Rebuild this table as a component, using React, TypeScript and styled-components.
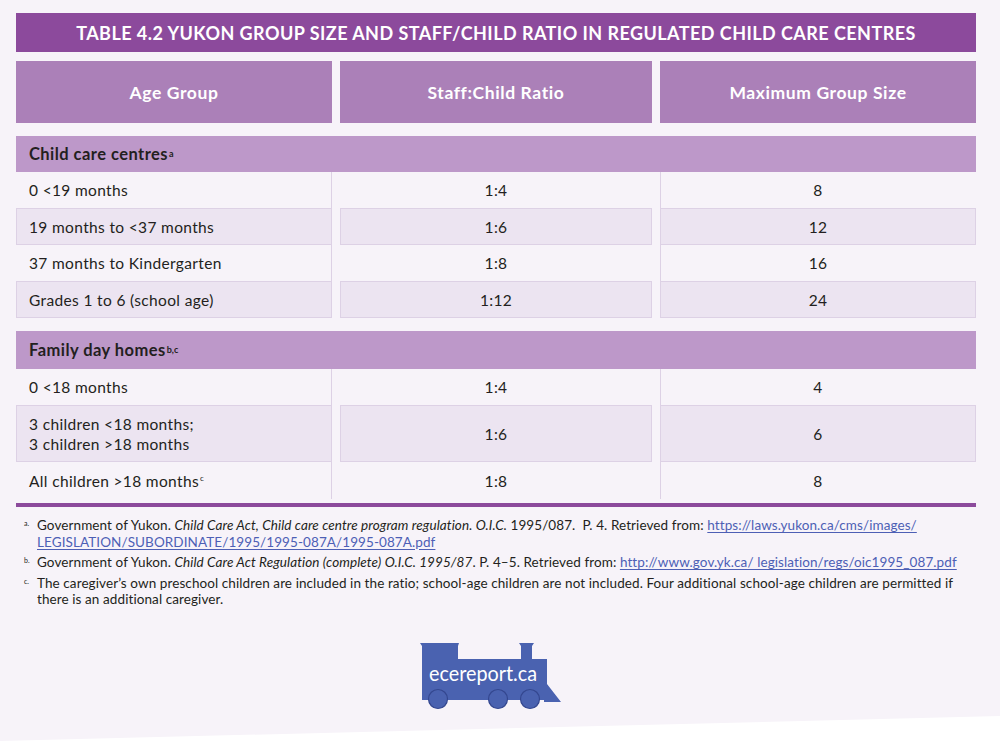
import React from 'react';
import styled, { createGlobalStyle } from 'styled-components';

const colors = {
  page: '#f7f3f9',
  title: '#8c4a9c',
  header: '#ab80b8',
  section: '#bd98c9',
  shaded: '#ece4f1',
  line: '#ddd1e5',
  text: '#231f20',
  link: '#4d5fb5',
  train: '#4a62b0',
};

const GlobalStyle = createGlobalStyle`
  html, body {
    margin: 0;
    padding: 0;
    background: #ffffff;
  }
  body {
    font-family: Lato, "Open Sans", sans-serif;
    color: ${colors.text};
  }
`;

const Page = styled.div`
  min-height: 743px;
  box-sizing: border-box;
  padding: 13px 24px 0 16px;
  background: ${colors.page};
  clip-path: polygon(0 0, 100% 0, 100% 716px, 0 741px);
`;

const Table = styled.div`
  width: 960px;
`;

const TitleBar = styled.div`
  height: 39px;
  display: flex;
  align-items: center;
  justify-content: center;
  background: ${colors.title};
  color: #fff;
  font-size: 18px;
  font-weight: 700;
  letter-spacing: 0.45px;
  text-transform: uppercase;
`;

const Grid = styled.div<{ $top?: number }>`
  display: grid;
  grid-template-columns: 316px 312px 316px;
  column-gap: 8px;
  margin-top: ${(p) => p.$top ?? 0}px;
`;

const HeaderCell = styled.div`
  height: 62px;
  display: flex;
  align-items: center;
  justify-content: center;
  background: ${colors.header};
  color: #fff;
  font-size: 17.5px;
  font-weight: 700;
  letter-spacing: 0.6px;
`;

const SectionRow = styled.div<{ $top: number; $height: number }>`
  margin-top: ${(p) => p.$top}px;
  height: ${(p) => p.$height}px;
  display: flex;
  align-items: center;
  padding-left: 13px;
  background: ${colors.section};
  font-size: 16.5px;
  font-weight: 700;
  letter-spacing: 0.45px;

  sup {
    font-size: 9px;
    font-weight: 700;
    vertical-align: 6px;
    line-height: 0;
    margin-left: 1px;
    letter-spacing: 0;
  }
`;

const Cell = styled.div<{ $shaded?: boolean; $center?: boolean; $edge?: 'left' | 'right'; $height: number }>`
  box-sizing: border-box;
  min-height: ${(p) => p.$height}px;
  display: flex;
  align-items: center;
  justify-content: ${(p) => (p.$center ? 'center' : 'flex-start')};
  padding-left: ${(p) => (p.$center ? 0 : 13)}px;
  font-size: 15.5px;
  letter-spacing: 0.35px;
  line-height: 20px;
  background: ${(p) => (p.$shaded ? colors.shaded : colors.page)};
  box-shadow: ${(p) =>
    p.$shaded
      ? `inset 0 0 0 1px ${colors.line}`
      : p.$edge === 'right'
      ? `inset -1px 0 0 ${colors.line}`
      : p.$edge === 'left'
      ? `inset 1px 0 0 ${colors.line}`
      : 'none'};

  sup {
    font-size: 8px;
    vertical-align: 6px;
    line-height: 0;
    margin-left: 1px;
  }
`;

const Rule = styled.div`
  margin-top: 4px;
  height: 4px;
  background: ${colors.title};
`;

const Notes = styled.ol`
  list-style: none;
  margin: 10px 0 0;
  padding: 0;
  font-size: 13.5px;
  letter-spacing: 0.09px;
  line-height: 16.5px;
`;

const Note = styled.li`
  display: grid;
  grid-template-columns: 21px 1fr;
  margin-bottom: 4px;

  em {
    font-style: italic;
  }

  a {
    color: ${colors.link};
    text-decoration: underline;
    text-underline-offset: 2px;
  }
`;

const Marker = styled.span`
  font-size: 7px;
  line-height: 12px;
  padding-left: 8px;
  letter-spacing: 0;
`;

const LogoWrap = styled.div`
  display: flex;
  justify-content: center;
  padding-right: 12px;
  margin-top: 32px;
`;

type Row = { age: React.ReactNode; ratio: string; size: string; height: number };

const centres: Row[] = [
  { age: '0 <19 months', ratio: '1:4', size: '8', height: 36 },
  { age: '19 months to <37 months', ratio: '1:6', size: '12', height: 37 },
  { age: '37 months to Kindergarten', ratio: '1:8', size: '16', height: 36 },
  { age: 'Grades 1 to 6 (school age)', ratio: '1:12', size: '24', height: 37 },
];

const homes: Row[] = [
  { age: '0 <18 months', ratio: '1:4', size: '4', height: 36 },
  {
    age: (
      <>
        3 children &lt;18 months;
        <br />3 children &gt;18 months
      </>
    ),
    ratio: '1:6',
    size: '6',
    height: 57,
  },
  {
    age: (
      <>
        All children &gt;18 months<sup>c</sup>
      </>
    ),
    ratio: '1:8',
    size: '8',
    height: 37,
  },
];

const DataRows = ({ rows }: { rows: Row[] }) => (
  <>
    {rows.map((r, i) => {
      const shaded = i % 2 === 1;
      return (
        <Grid key={i}>
          <Cell $shaded={shaded} $edge="right" $height={r.height}>
            <span>{r.age}</span>
          </Cell>
          <Cell $shaded={shaded} $center $height={r.height}>
            {r.ratio}
          </Cell>
          <Cell $shaded={shaded} $center $edge="left" $height={r.height}>
            {r.size}
          </Cell>
        </Grid>
      );
    })}
  </>
);

const TrainLogo = () => (
  <svg width="145" height="72" viewBox="418 642 145 72">
    <path
      d="M420 645 H459 L458 648 V661 H521 V648 L519 645 H534 L532 648 V661 H547 V686 L561 704 H544 V702 H422 V648 Z"
      fill={colors.train}
    />
    {[438, 498, 530].map((cx) => (
      <circle key={cx} cx={cx} cy={701} r={9.5} fill={colors.train} stroke="#34478f" strokeWidth={1.2} />
    ))}
    <text
      x={429}
      y={683}
      fill="#fff"
      fontFamily="Lato, sans-serif"
      fontSize={21}
      textLength={108}
      lengthAdjust="spacingAndGlyphs"
    >
      ecereport.ca
    </text>
  </svg>
);

export default function App() {
  return (
    <>
      <GlobalStyle />
      <Page>
        <Table>
          <TitleBar>Table 4.2 Yukon group size and staff/child ratio in regulated child care centres</TitleBar>
          <Grid $top={9}>
            <HeaderCell>Age Group</HeaderCell>
            <HeaderCell>Staff:Child Ratio</HeaderCell>
            <HeaderCell>Maximum Group Size</HeaderCell>
          </Grid>

          <SectionRow $top={13} $height={36}>
            Child care centres<sup>a</sup>
          </SectionRow>
          <DataRows rows={centres} />

          <SectionRow $top={13} $height={38}>
            Family day homes<sup>b,c</sup>
          </SectionRow>
          <DataRows rows={homes} />

          <Rule />

          <Notes>
            <Note>
              <Marker>a.</Marker>
              <span>
                Government of Yukon. <em>Child Care Act, Child care centre program regulation. O.I.C.</em> 1995/087.&nbsp; P. 4.
                Retrieved from: <a href="#">https://laws.yukon.ca/cms/images/</a>
                <br />
                <a href="#">LEGISLATION/SUBORDINATE/1995/1995-087A/1995-087A.pdf</a>
              </span>
            </Note>
            <Note>
              <Marker>b.</Marker>
              <span>
                Government of Yukon. <em>Child Care Act Regulation (complete) O.I.C. 1995/87</em>. P. 4–5. Retrieved from:{' '}
                <a href="#">http://www.gov.yk.ca/ legislation/regs/oic1995_087.pdf</a>
              </span>
            </Note>
            <Note>
              <Marker>c.</Marker>
              <span>
                The caregiver’s own preschool children are included in the ratio; school-age children are not included. Four
                additional school-age children are permitted if
                <br />
                there is an additional caregiver.
              </span>
            </Note>
          </Notes>

          <LogoWrap>
            <TrainLogo />
          </LogoWrap>
        </Table>
      </Page>
    </>
  );
}
